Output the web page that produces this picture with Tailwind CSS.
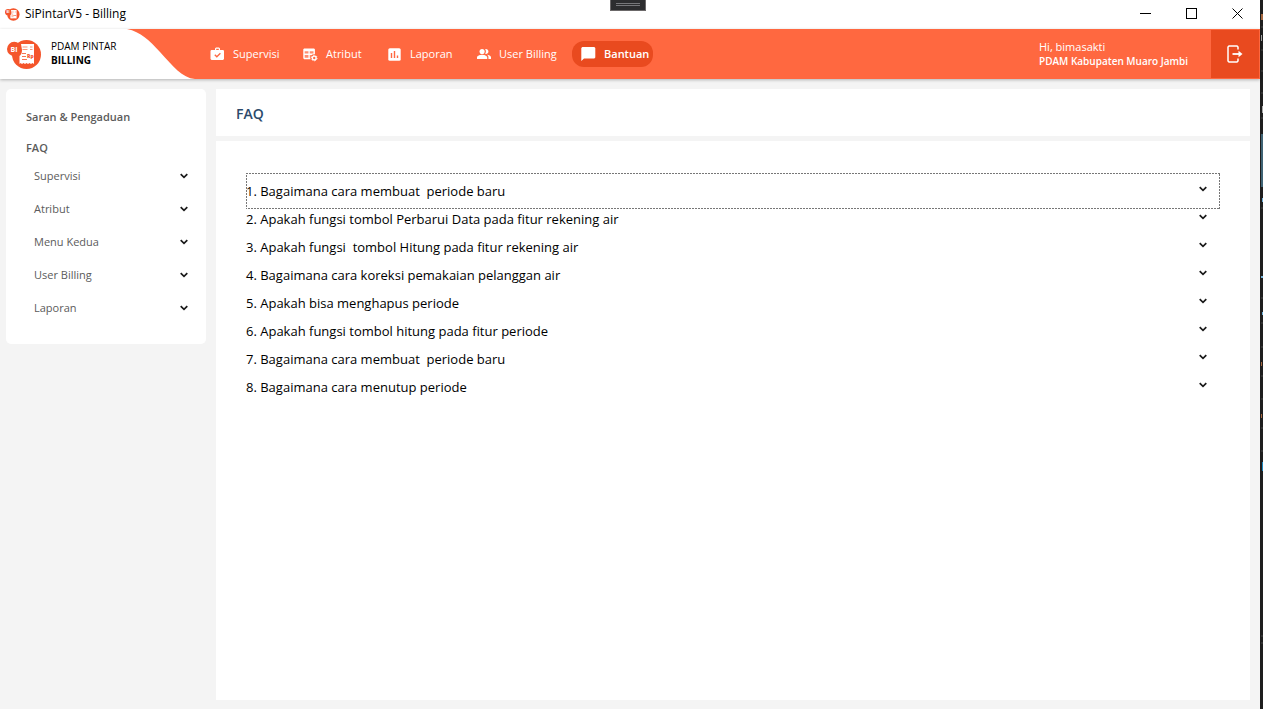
<!DOCTYPE html>
<html lang="id">
<head>
<meta charset="utf-8">
<title>SiPintarV5 - Billing</title>
<script src="https://cdn.jsdelivr.net/npm/@tailwindcss/browser@4"></script>
</head>
<body class="flex h-screen overflow-hidden bg-[#1e1e1e] font-['Open_Sans','Noto_Sans',sans-serif] text-black">
<svg class="hidden" aria-hidden="true">
  <symbol id="chev" viewBox="0 0 8 6"><path d="M0.7 1.2L4 4.4L7.3 1.2" fill="none" stroke="#1a1a1a" stroke-width="1.7"/></symbol>
  <symbol id="logo" viewBox="0 0 35 31">
    <circle cx="19.500" cy="15.500" r="14.500" fill="#f4552b"/>
    <circle cx="7.200" cy="10" r="7.200" fill="#f4552b"/>
    <path d="M14 5h13v20l-1.500-1-1.500 1-1.500-1-1.500 1-1.500-1-1.500 1-1.500-1-1.500 1-1.500-1-1 1V17c1.500-1 2.500-3 2.500-6z" fill="#fff"/>
    <path d="M15.500 8h5M23 8h2.500M15.500 10.500h5M23 10.500h2.500" stroke="#f4552b" stroke-width="1" opacity=".6"/>
    <path d="M15 14.500h4M15 17.500h4M15 20.500h5" stroke="#f4552b" stroke-width="1.200" opacity=".8"/>
    <text x="20" y="18.500" font-size="5" font-weight="800" fill="#f4552b">Rp</text>
    <text x="3.500" y="12.500" font-size="7" font-weight="700" fill="#fff">BI</text>
  </symbol>
</svg>

<div class="flex min-w-0 flex-1 flex-col bg-[#f4f4f4]">
  <div class="relative flex h-[29px] shrink-0 items-center bg-white pl-[5px]">
    <svg class="h-[15px] w-[15px]"><use href="#logo"/></svg>
    <span class="ml-[5px] pb-px text-[12px]">SiPintarV5 - Billing</span>
    <div class="absolute left-[610px] top-0 flex h-[11px] w-9 flex-col items-center gap-px border border-t-0 border-[#6b6869] bg-[#2d2d2f] pt-[3px]">
      <i class="h-px w-6 bg-[#77777a]"></i><i class="h-px w-6 bg-[#77777a]"></i>
    </div>
    <div class="ml-auto flex h-full pb-[3px]">
      <button aria-label="Minimize" class="flex w-[45px] items-center justify-center"><svg class="h-[11px] w-[11px]" viewBox="0 0 11 11"><path d="M0 5.500h11" stroke="#000" shape-rendering="crispEdges"/></svg></button>
      <button aria-label="Maximize" class="flex w-[46px] items-center justify-center"><svg class="h-[11px] w-[11px]" viewBox="0 0 11 11"><path d="M.5.5h10v10H.5z" stroke="#000" fill="none" shape-rendering="crispEdges"/></svg></button>
      <button aria-label="Close" class="flex w-[46px] items-center justify-center"><svg class="h-[11px] w-[11px]" viewBox="0 0 11 11"><path d="M.5.5l10 10M10.500.5l-10 10" stroke="#000"/></svg></button>
    </div>
  </div>

  <header class="z-10 flex h-[50px] shrink-0 bg-[#ff6840] text-white shadow-[0_1px_3px_#0004]">
    <div class="flex w-[127px] items-center bg-white pl-[7px] text-black">
      <svg class="h-[31px] w-[35px]"><use href="#logo"/></svg>
      <div class="ml-[9px] pb-[2px] text-[10px] leading-[14px]"><div>PDAM PINTAR</div><div class="font-bold">BILLING</div></div>
    </div>
    <svg class="h-[50px] w-[68px]" viewBox="0 0 68 50"><path d="M0 0C14 3 22 11 33 23C46 37 55 49 68 50H0z" fill="#fff"/></svg>
    <nav class="ml-[6px] flex items-center gap-[9px] text-[11px]">
      <a href="#" class="flex h-[26px] w-[84px] items-center gap-2 rounded-xl pl-[9px]"><svg class="h-[15px] w-[15px] shrink-0" viewBox="0 0 15 15"><path fill="#fff" fill-rule="evenodd" d="M5 3V1.500L6 .5h3l1 1V3h3.200l.8.800V12l-1 1H1.500l-1-1V3.800L1.300 3zM6.200 3h2.600V1.700H6.200z"/><path d="M4.800 7.800l2 2 3.600-3.600" stroke="#ff6840" stroke-width="1.300" fill="none"/></svg>Supervisi</a>
      <a href="#" class="flex h-[26px] w-[76px] items-center gap-2 rounded-xl pl-[9px]"><svg class="h-[15px] w-[15px] shrink-0" viewBox="0 0 16 15"><path fill="#fff" d="M1.200 1h10.600l.9.900V7.500L9.500 8l-1.500 3v1.500H1.200l-.9-.9V1.900z"/><path fill="#ff6840" opacity=".75" d="M1.800 4h4v2.500h-4zM7.200 4h4v2.500h-4zM1.800 8h4v3h-4zM7.200 8h2l-1 3h-1z"/><circle cx="12" cy="11.200" r="3.900" fill="#ff6840"/><circle cx="12" cy="11.200" r="2" fill="none" stroke="#fff" stroke-width="1.500"/><circle cx="12" cy="11.200" r="3" fill="none" stroke="#fff" stroke-width="1" stroke-dasharray="1.570 1.570"/></svg>Atribut</a>
      <a href="#" class="flex h-[26px] w-[80px] items-center gap-[9px] rounded-xl pl-[9px]"><svg class="h-[13px] w-[13px] shrink-0" viewBox="0 0 13 13"><rect x=".3" y=".3" width="12.400" height="12.400" rx="1.500" fill="#fff"/><path d="M3.500 5v5M6.500 3v7M9.500 7.500V10" stroke="#ff6840" stroke-width="1.400"/></svg>Laporan</a>
      <a href="#" class="flex h-[26px] w-[95px] items-center gap-2 rounded-xl pl-[9px]"><svg class="h-[14px] w-[14px] shrink-0" viewBox="1 2 22 20"><path fill="#fff" d="M16.700 13.100c1.400.900 2.300 2.200 2.300 3.900v3h4v-3c0-2.200-3.600-3.500-6.300-3.900z"/><circle cx="9" cy="8" r="4" fill="#fff"/><path fill="#fff" d="M15 12c2.200 0 4-1.800 4-4s-1.800-4-4-4c-.5 0-.9.100-1.300.2.800 1 1.300 2.400 1.300 3.800s-.5 2.700-1.300 3.800c.4.100.8.200 1.300.2zM9 13c-2.700 0-8 1.300-8 4v3h16v-3c0-2.700-5.300-4-8-4z"/></svg>User Billing</a>
      <a href="#" aria-current="page" class="flex h-[26px] w-[81px] items-center gap-2 rounded-xl bg-[#e94a1f] pl-[9px] font-semibold"><svg class="h-[14px] w-[15px] shrink-0" viewBox="0 0 15 14"><path fill="#fff" d="M1.300 0h12l1 1v9.500l-1 1H3L.3 14V1z"/></svg>Bantuan</a>
    </nav>
    <div class="ml-auto w-[172px] pt-[11px] text-[10px] leading-[14px]"><div class="text-[11px]">Hi, bimasakti</div><div class="whitespace-nowrap font-semibold">PDAM Kabupaten Muaro Jambi</div></div>
    <button aria-label="Keluar" class="my-px mr-px flex w-12 items-center justify-center bg-[#e94a1f]"><svg class="h-[18px] w-[16px]" viewBox="0 0 16 18"><path d="M11 4.500V2l-1-1H2L1 2v14l1 1h8l1-1v-2.500" fill="none" stroke="#fff" stroke-width="1.500"/><path d="M5.500 9h7" stroke="#fff" stroke-width="1.800"/><path d="M11.500 5.800L15.500 9l-4 3.200z" fill="#fff"/></svg></button>
  </header>

  <div class="flex min-h-0 flex-1 items-start gap-[10px] pb-[9px] pl-[6px] pr-[10px] pt-[10px]">
    <aside class="w-[200px] shrink-0 rounded-[5px] bg-white pb-5 pt-[17px] text-[11px] text-[#5b5b5b]">
      <a href="#" class="flex h-[22px] items-center pl-5 font-semibold">Saran &amp; Pengaduan</a>
      <a href="#" class="mt-[9px] flex h-[22px] items-center pl-5 font-semibold">FAQ</a>
      <button class="flex h-[33px] w-full items-center justify-between pl-7 pr-[18px]"><span class="pt-px">Supervisi</span><svg class="h-[6px] w-2"><use href="#chev"/></svg></button>
      <button class="flex h-[33px] w-full items-center justify-between pl-7 pr-[18px]"><span class="pt-px">Atribut</span><svg class="h-[6px] w-2"><use href="#chev"/></svg></button>
      <button class="flex h-[33px] w-full items-center justify-between pl-7 pr-[18px]"><span class="pt-px">Menu Kedua</span><svg class="h-[6px] w-2"><use href="#chev"/></svg></button>
      <button class="flex h-[33px] w-full items-center justify-between pl-7 pr-[18px]"><span class="pt-px">User Billing</span><svg class="h-[6px] w-2"><use href="#chev"/></svg></button>
      <button class="flex h-[33px] w-full items-center justify-between pl-7 pr-[18px]"><span class="pt-px">Laporan</span><svg class="h-[6px] w-2"><use href="#chev"/></svg></button>
    </aside>
    <main class="flex min-w-0 flex-1 flex-col gap-[5px] self-stretch">
      <h1 class="flex h-[47px] items-center bg-white pl-5 pt-px text-[14px] font-semibold text-[#2c4a6b]">FAQ</h1>
      <section class="flex flex-1 flex-col bg-white pl-[30px] pr-[30px] pt-8 text-[13px]">
        <button class="relative -mb-2 flex h-9 items-center justify-between whitespace-pre pr-[13px]"><span class="pt-[2px]">1. Bagaimana cara membuat  periode baru</span><svg class="mb-1 h-[6px] w-2"><use href="#chev"/></svg><svg class="absolute inset-0 h-full w-full"><rect width="100%" height="100%" fill="none" stroke="#777" stroke-width="2" stroke-dasharray="2 1" shape-rendering="crispEdges"/></svg></button>
        <button class="-mb-2 flex h-9 items-center justify-between whitespace-pre pr-[13px]"><span class="pt-[2px]">2. Apakah fungsi tombol Perbarui Data pada fitur rekening air</span><svg class="mb-1 h-[6px] w-2"><use href="#chev"/></svg></button>
        <button class="-mb-2 flex h-9 items-center justify-between whitespace-pre pr-[13px]"><span class="pt-[2px]">3. Apakah fungsi  tombol Hitung pada fitur rekening air</span><svg class="mb-1 h-[6px] w-2"><use href="#chev"/></svg></button>
        <button class="-mb-2 flex h-9 items-center justify-between whitespace-pre pr-[13px]"><span class="pt-[2px]">4. Bagaimana cara koreksi pemakaian pelanggan air</span><svg class="mb-1 h-[6px] w-2"><use href="#chev"/></svg></button>
        <button class="-mb-2 flex h-9 items-center justify-between whitespace-pre pr-[13px]"><span class="pt-[2px]">5. Apakah bisa menghapus periode</span><svg class="mb-1 h-[6px] w-2"><use href="#chev"/></svg></button>
        <button class="-mb-2 flex h-9 items-center justify-between whitespace-pre pr-[13px]"><span class="pt-[2px]">6. Apakah fungsi tombol hitung pada fitur periode</span><svg class="mb-1 h-[6px] w-2"><use href="#chev"/></svg></button>
        <button class="-mb-2 flex h-9 items-center justify-between whitespace-pre pr-[13px]"><span class="pt-[2px]">7. Bagaimana cara membuat  periode baru</span><svg class="mb-1 h-[6px] w-2"><use href="#chev"/></svg></button>
        <button class="-mb-2 flex h-9 items-center justify-between whitespace-pre pr-[13px]"><span class="pt-[2px]">8. Bagaimana cara menutup periode</span><svg class="mb-1 h-[6px] w-2"><use href="#chev"/></svg></button>
      </section>
    </main>
  </div>
</div>
<svg class="h-[709px] w-[3px] shrink-0" viewBox="0 0 3 709" aria-hidden="true">
  <path d="M1 27h2M1 50h2M1 71h2M1 93h2M1 118h2M1 208h2M1 298h2M1 323h2M1 347h2M1 376h2M1 399h2M1 428h2M1 451h2M1 636h2M1 643h2" stroke="#444"/>
  <path d="M1 134h2v53H1z" fill="#3f6374"/><path d="M2 462h1v9H2z" fill="#1c86bd"/>
  <path d="M1 14h2v6H1zM1 362h1v4H1zM1 414h1v4H1z" fill="#a5673f"/><path d="M2 198h1v4H2zM1 276h2v2H1zM2 312h1v3H2z" fill="#6fb0d8"/>
  <path d="M2 106h1v7H2zM1 35h1v6H1z" fill="#aaa"/>
</svg>
</body>
</html>
